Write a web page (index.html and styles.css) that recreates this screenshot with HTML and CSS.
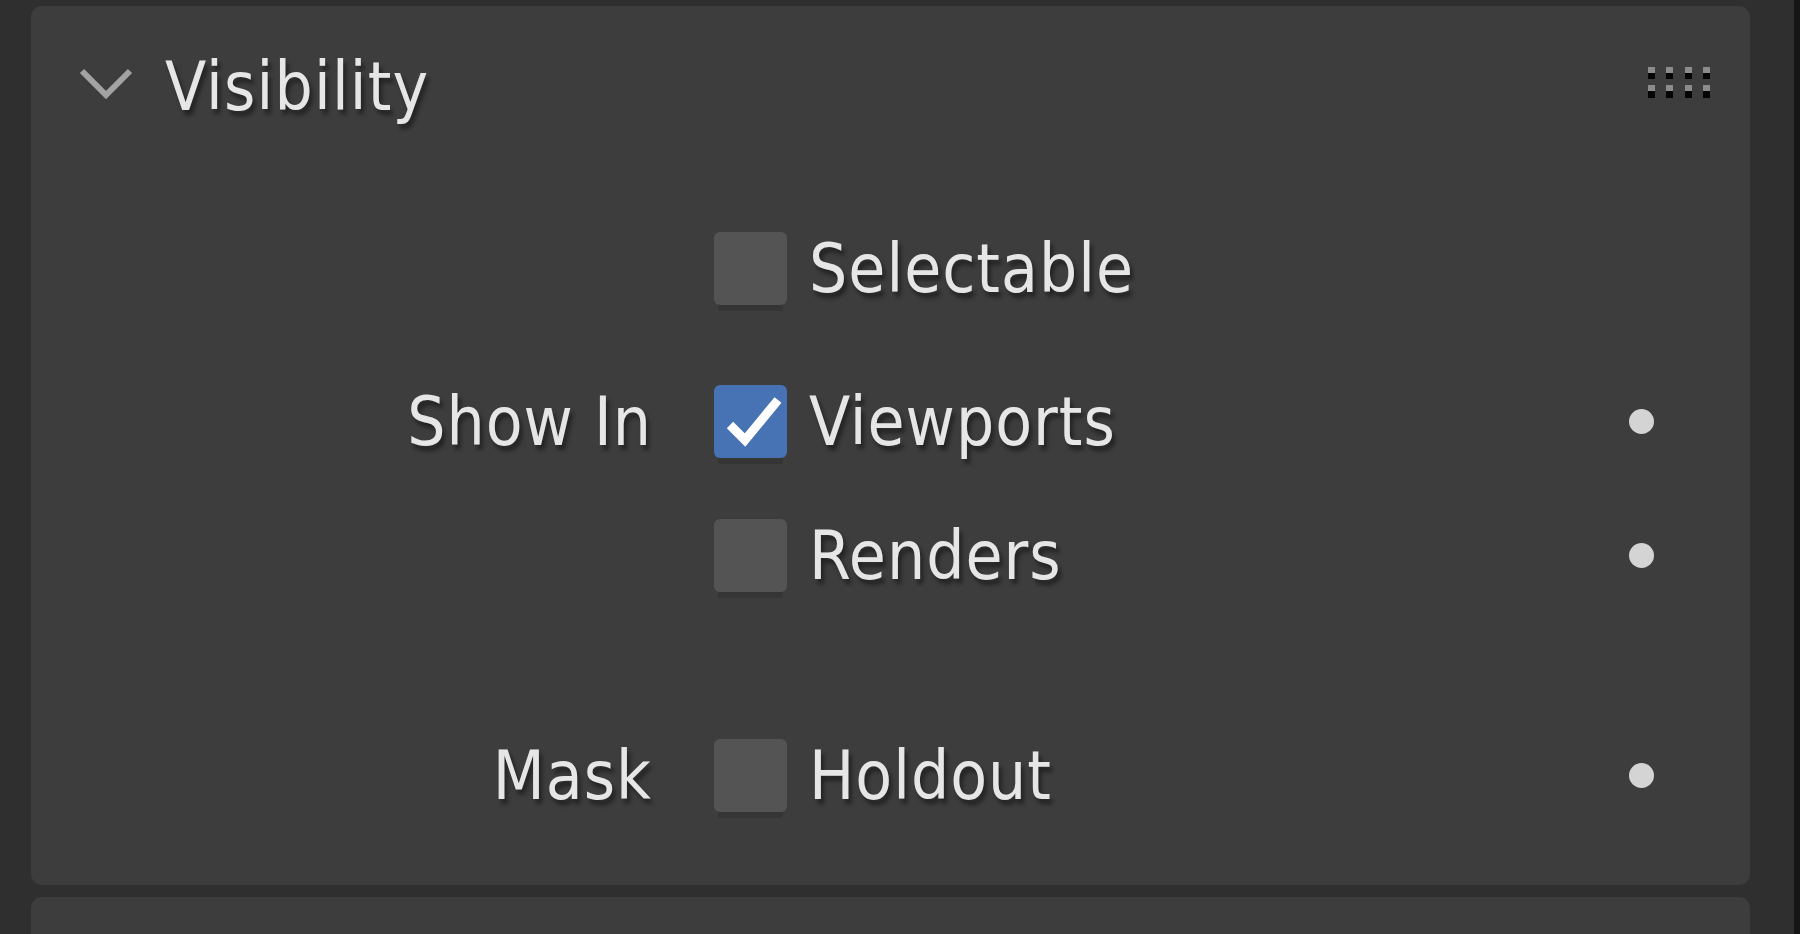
FILE: index.html
```html
<!DOCTYPE html>
<html lang="en">
<head>
    <meta charset="UTF-8">
    <meta name="viewport" content="width=device-width, initial-scale=1.0">
    <title>Visibility</title>
    <link rel="stylesheet" href="styles.css">
</head>
<body>
    <div class="region">
        <div class="panels">
            <section class="panel">
                <header class="panel-header">
                    <svg class="chevron" width="56" height="32" viewBox="0 0 56 32">
                        <polyline points="4,4 28,28 52,4" fill="none" stroke="#a3a3a3" stroke-width="6"/>
                    </svg>
                    <h2 class="panel-title">Visibility</h2>
                    <div class="drag-handle">
                        <span></span><span></span><span></span><span></span>
                        <span></span><span></span><span></span><span></span>
                    </div>
                </header>

                <div class="panel-body">
                    <div class="row row-selectable">
                        <span class="label"></span>
                        <span class="checkbox"></span>
                        <span class="option">Selectable</span>
                    </div>

                    <div class="row row-viewports">
                        <span class="label">Show In</span>
                        <span class="checkbox checked">
                            <svg width="73" height="73" viewBox="0 0 73 73">
                                <polyline points="16,40 31,55 64,15" fill="none" stroke="#ffffff" stroke-width="9"/>
                            </svg>
                        </span>
                        <span class="option">Viewports</span>
                        <span class="decorator"></span>
                    </div>

                    <div class="row row-renders">
                        <span class="label"></span>
                        <span class="checkbox"></span>
                        <span class="option">Renders</span>
                        <span class="decorator"></span>
                    </div>

                    <div class="row row-holdout">
                        <span class="label">Mask</span>
                        <span class="checkbox"></span>
                        <span class="option">Holdout</span>
                        <span class="decorator"></span>
                    </div>
                </div>
            </section>

            <section class="panel panel-next"></section>
        </div>
        <div class="scroll-edge"></div>
    </div>
</body>
</html>
```

FILE: styles.css
```css
html, body {
    margin: 0;
    height: 100%;
}
body {
    background-color: #2f2f2f;
    font-family: "DejaVu Sans Condensed", "DejaVu Sans", sans-serif;
    font-stretch: condensed;
    color: #e6e6e6;
    overflow: hidden;
}
.region {
    display: flex;
    height: 934px;
}
.panels {
    flex: 1;
    padding: 6px 44px 0 31px;
    overflow: hidden;
}
.scroll-edge {
    width: 6px;
    background-color: #161616;
}
.panel {
    background-color: #3d3d3d;
    border-radius: 11px;
    height: 879px;
}
.panel-next {
    margin-top: 12px;
    height: 60px;
}
.panel-header {
    display: flex;
    align-items: center;
    height: 153px;
    padding: 0 40px 0 47px;
}
.chevron {
    display: block;
}
.panel-title {
    margin: 8px 0 0 31px;
    font-size: 67px;
    font-weight: normal;
    letter-spacing: 1.2px;
    text-shadow: 3px 5px 4px rgba(0, 0, 0, 0.45);
}
.drag-handle {
    margin-left: auto;
    display: grid;
    grid-template-columns: repeat(4, 7px);
    grid-template-rows: 12px 13px;
    column-gap: 11.5px;
    row-gap: 6px;
}
.drag-handle span {
    background: linear-gradient(#8c8c8c 50%, #050505 50%);
}
.panel-body {
    padding-top: 73px;
}
.row {
    display: flex;
    align-items: center;
    height: 73px;
    font-size: 67px;
    letter-spacing: 1px;
    text-shadow: 3px 5px 4px rgba(0, 0, 0, 0.45);
}
.row-viewports {
    margin-top: 80px;
}
.row-renders {
    margin-top: 61px;
}
.row-holdout {
    margin-top: 147px;
}
.label {
    width: 621px;
    text-align: right;
    white-space: nowrap;
}
.checkbox {
    position: relative;
    width: 73px;
    height: 73px;
    margin-left: 62px;
    border-radius: 6px;
    background-color: #545454;
    box-shadow: 0 10px 0 -4px #353535;
}
.checkbox.checked {
    background-color: #4772b3;
}
.checkbox svg {
    display: block;
}
.option {
    margin-left: 22px;
    white-space: nowrap;
}
.decorator {
    width: 25px;
    height: 25px;
    margin: 0 96px 0 auto;
    border-radius: 50%;
    background-color: #d4d4d4;
}
```
